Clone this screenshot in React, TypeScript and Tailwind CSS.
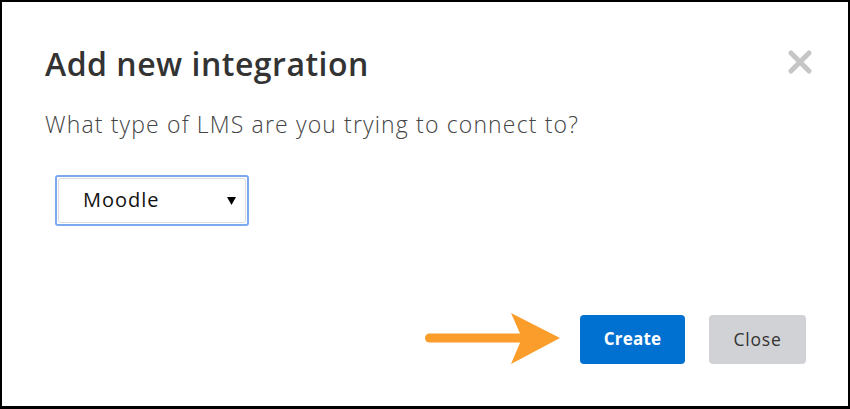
// Add-integration dialog with an annotation arrow pointing at Create
export default function App() {
  return (
    <div
      className="w-[850px] h-[409px] bg-white border-2 border-b-[3px] border-black pl-[43px] pr-[36px] pt-[44px] text-[#333]"
      style={{ fontFamily: '"Open Sans", Lato, sans-serif' }}
    >
      {/* ── Header ─────────────────────────────── */}
      <div className="flex items-start justify-between">
        <h2 className="text-[32px] leading-[36px] font-semibold tracking-[0.5px] text-[#333]">
          Add new integration
        </h2>
        <button className="mt-[4px] w-[24px] h-[24px] flex items-center justify-center" aria-label="Close">
          <svg width="24" height="24" viewBox="0 0 24 24">
            <path d="M3 3 L21 21 M21 3 L3 21" stroke="#c6c6c6" strokeWidth="5" strokeLinecap="round" />
          </svg>
        </button>
      </div>

      <p className="mt-[28px] text-[23px] leading-[28px] font-light tracking-[1.15px] text-[#444]">
        What type of LMS are you trying to connect to?
      </p>

      {/* ── LMS select ─────────────────────────── */}
      <div className="mt-[37px] ml-[10px] w-[194px] h-[51px] rounded-[3px] border-2 border-[#7ba8ee] p-px">
        <div className="h-full rounded-[2px] border border-[#dcdcdc] flex items-center justify-between pl-[24px] pr-[9px]">
          <span className="text-[20px] leading-[24px] tracking-[1px] text-[#111] -mt-[2px]">Moodle</span>
          <svg width="9" height="8" viewBox="0 0 9 8">
            <path d="M0 0 H9 L4.5 8 Z" fill="#000" />
          </svg>
        </div>
      </div>

      {/* ── Footer actions ─────────────────────── */}
      <div className="mt-[87px] flex items-center justify-end pr-[6px]">
        <svg width="136" height="52" viewBox="0 0 136 52" className="mr-[19px]">
          <path d="M4.5 25 H98" stroke="#fa9d2b" strokeWidth="9" strokeLinecap="round" />
          <path d="M86 0 L135 25 L86 51 L97 25 Z" fill="#fa9d2b" />
        </svg>
        <button className="w-[105px] h-[49px] rounded-[4px] bg-[#0071d1] text-white text-[17px] font-bold tracking-[0.2px]">
          Create
        </button>
        <button className="ml-[24px] w-[97px] h-[49px] rounded-[4px] bg-[#d1d2d6] text-[#333] text-[17.5px] font-medium tracking-[0.8px]">
          Close
        </button>
      </div>
    </div>
  )
}
